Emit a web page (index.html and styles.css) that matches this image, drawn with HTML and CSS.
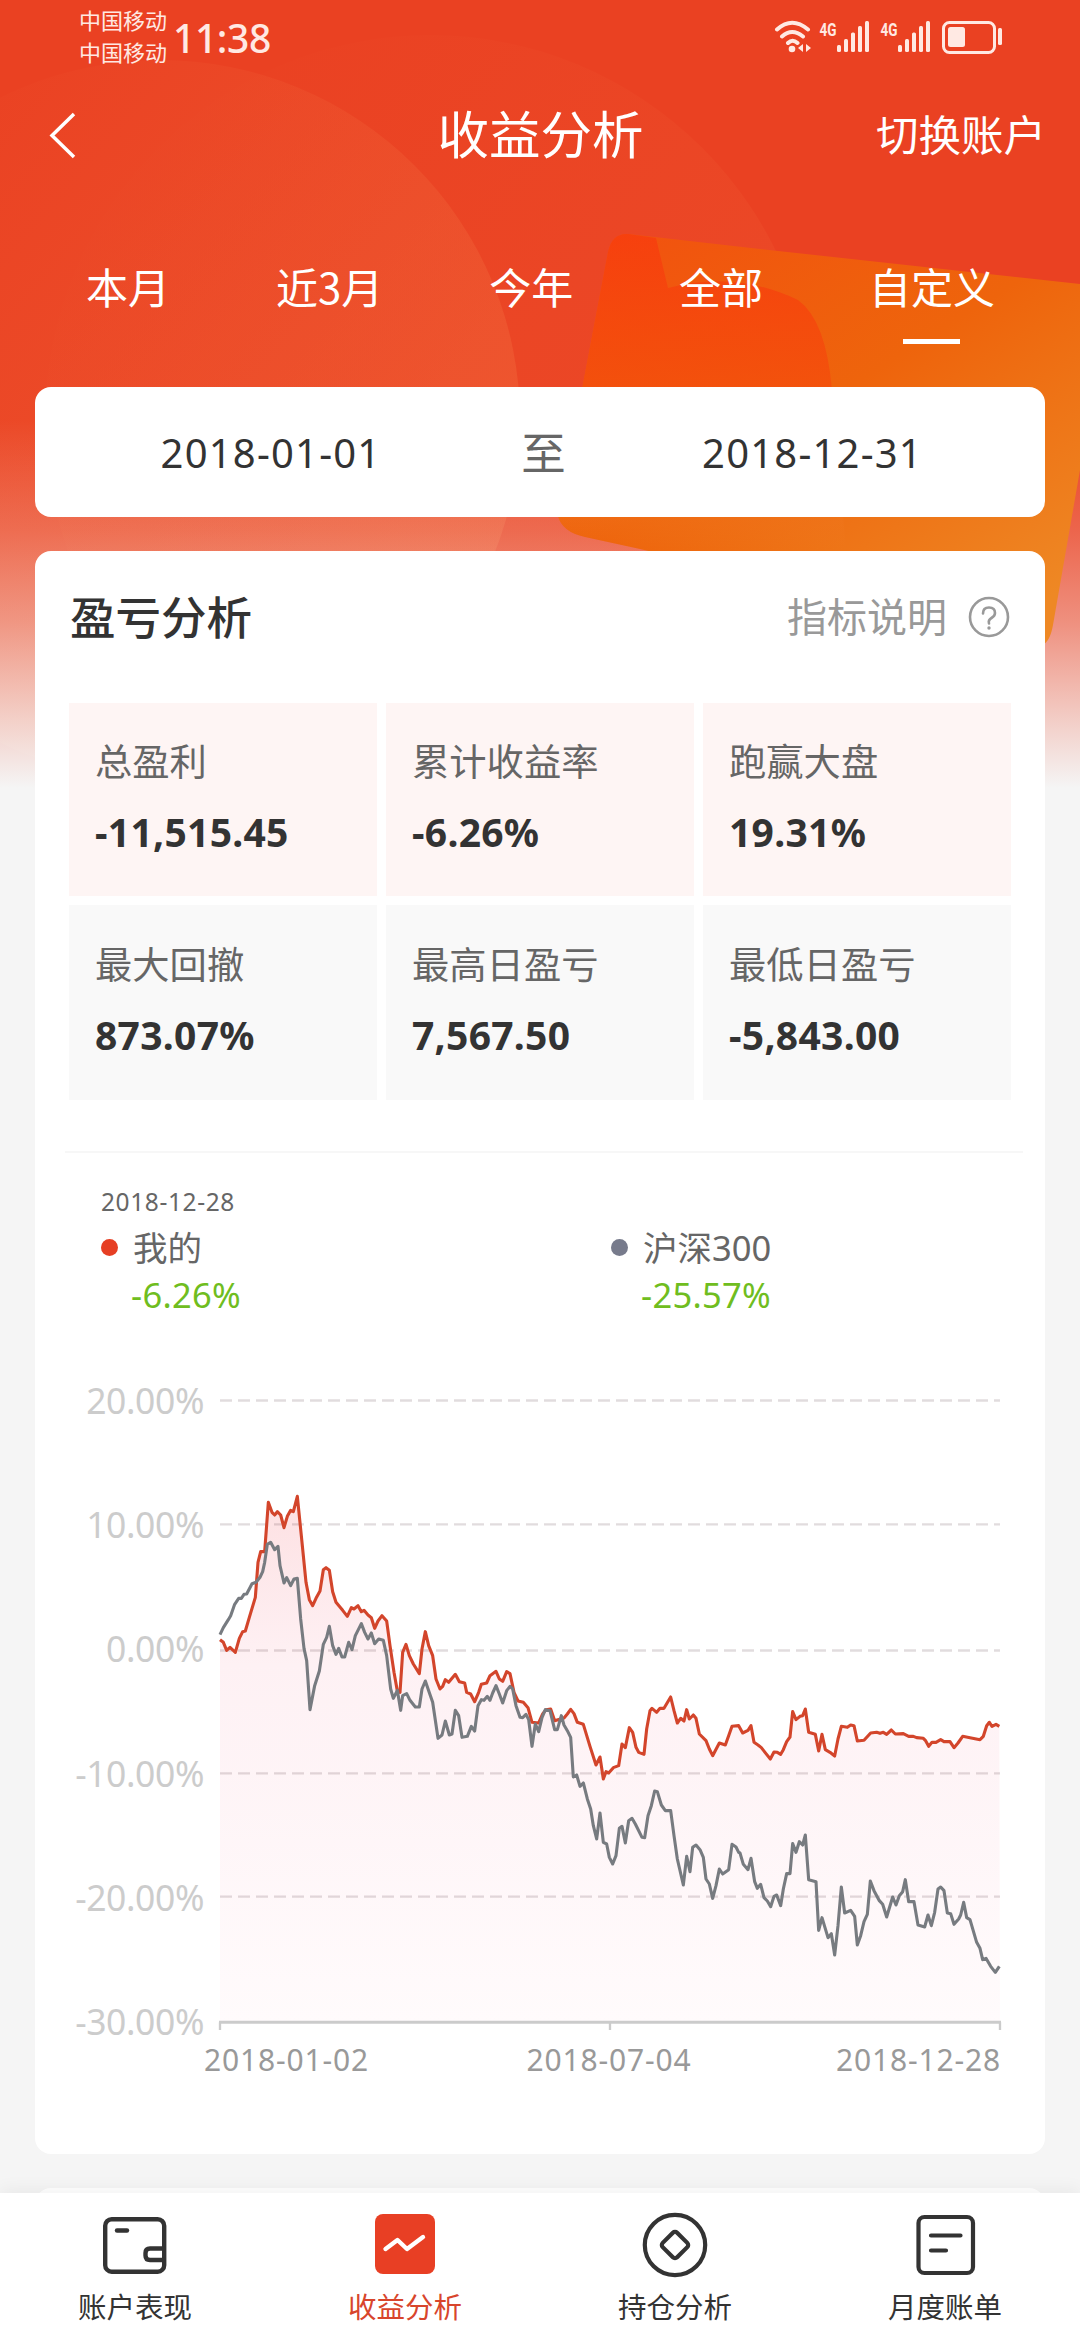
FILE: index.html
```html
<!DOCTYPE html>
<html lang="zh-CN">
<head>
<meta charset="utf-8">
<title>收益分析</title>
<link rel="stylesheet" href="styles.css">
</head>
<body>
<div class="screen">
  <main class="content">
    <svg class="backdrop" viewBox="0 0 1080 800" aria-hidden="true">
      <defs>
        <linearGradient id="lobe" x1=".1" y1=".1" x2=".8" y2=".7">
          <stop offset="0" stop-color="#f26a3c" stop-opacity="0"/>
          <stop offset="1" stop-color="#f26a3c" stop-opacity=".42"/>
        </linearGradient>
        <linearGradient id="fade" x1="0" y1="0" x2="0" y2="1">
          <stop offset="0" stop-color="#f5f5f5" stop-opacity="0"/>
          <stop offset=".3" stop-color="#f5f5f5" stop-opacity=".2"/>
          <stop offset=".55" stop-color="#f5f5f5" stop-opacity=".44"/>
          <stop offset=".8" stop-color="#f5f5f5" stop-opacity=".76"/>
          <stop offset="1" stop-color="#f5f5f5"/>
        </linearGradient>
        <linearGradient id="ticket" x1="0" y1="0" x2=".8" y2="1">
          <stop offset="0" stop-color="#f2500f"/>
          <stop offset=".5" stop-color="#ee640c"/>
          <stop offset="1" stop-color="#ee8824"/>
        </linearGradient>
        <linearGradient id="fold" x1="0" y1="0" x2="0" y2="1">
          <stop offset="0" stop-color="#f83a0e"/>
          <stop offset=".5" stop-color="#f44d0c"/>
          <stop offset=".85" stop-color="#f0741c" stop-opacity=".7"/>
          <stop offset="1" stop-color="#f07c22" stop-opacity="0"/>
        </linearGradient>
      </defs>
      <rect width="1080" height="800" fill="#ea4122"/>
      <circle cx="430" cy="420" r="385" fill="url(#lobe)" opacity=".45"/>
      <circle cx="160" cy="420" r="360" fill="url(#lobe)"/>
      <rect y="420" width="1080" height="368" fill="url(#fade)"/>
      <rect y="788" width="1080" height="12" fill="#f5f5f5"/>
      <path d="M628 234Q612 233 608 252L558 516Q562 532 585 537L640 549L1042 645Q1050 642 1053 625L1080 470V284L760 249Z" fill="url(#ticket)"/>
      <path d="M628 234Q612 233 608 252L558 516Q562 532 585 537L640 549H846L832 390Q826 320 798 300Q735 270 668 288L656 238Z" fill="url(#fold)" opacity=".75"/>
    </svg>

    <header class="top">
      <div class="status">
        <div class="carriers"><span>中国移动</span><span>中国移动</span></div>
        <time class="clock">11:38</time>
        <svg class="signals" viewBox="0 0 232 40" fill="#ffe9e3">
          <g fill="none" stroke="#ffe9e3" stroke-width="4" stroke-linecap="round">
            <path d="M3 12.500Q18-1 34 12.500M8 19.500Q18 10.500 29 19.500M14 26Q18.500 21.500 23.500 26"/>
          </g>
          <circle cx="18" cy="32" r="3.300"/>
          <path d="M29 27v8l-5-4zM32 27v8l5-4z"/>
          <text x="45.500" y="18.500" class="net" textLength="17" lengthAdjust="spacingAndGlyphs">4G</text><text x="106.500" y="18.500" class="net" textLength="17" lengthAdjust="spacingAndGlyphs">4G</text>
          <g id="bars"><rect x="63" y="28" width="4" height="7" rx="1.500"/><rect x="70" y="22" width="4" height="13" rx="1.500"/><rect x="77" y="15.500" width="4" height="19.500" rx="1.500"/><rect x="84" y="9" width="4" height="26" rx="1.500"/><rect x="91" y="4" width="4" height="31" rx="1.500"/></g>
          <use href="#bars" x="61"/>
          <rect x="169.500" y="5.500" width="51" height="30" rx="6" fill="none" stroke="#ffe9e3" stroke-width="3"/>
          <rect x="174" y="10" width="17" height="20" rx="2.500"/>
          <rect x="224" y="11" width="4" height="17" rx="1.500"/>
        </svg>
      </div>
      <div class="titlebar">
        <svg class="back" viewBox="0 0 30 48"><path d="M27 3L5 24.500L27 46" fill="none" stroke="#fff" stroke-width="3.500"/></svg>
        <h1>收益分析</h1>
        <a class="switch">切换账户</a>
      </div>
      <nav class="tabs">
        <a>本月</a><a>近3月</a><a>今年</a><a>全部</a><a class="active">自定义</a>
      </nav>
    </header>

    <section class="range">
      <span class="date">2018-01-01</span><span class="to">至</span><span class="date">2018-12-31</span>
    </section>

    <section class="panel">
      <div class="panel-head">
        <h2>盈亏分析</h2>
        <a class="help"><span>指标说明</span>
          <svg viewBox="0 0 42 42" fill="none" stroke="#999" stroke-width="2.600"><circle cx="21" cy="21" r="19"/><path d="M15 17.500Q15 11.500 21 11.500T27 17Q27 20 23.500 22T21 27.500" stroke-linecap="round"/><circle cx="21" cy="32" r="1.700" fill="#999" stroke="none"/></svg>
        </a>
      </div>
      <dl class="stats">
        <div><dt>总盈利</dt><dd>-11,515.45</dd></div>
        <div><dt>累计收益率</dt><dd>-6.26%</dd></div>
        <div><dt>跑赢大盘</dt><dd>19.31%</dd></div>
        <div><dt>最大回撤</dt><dd>873.07%</dd></div>
        <div><dt>最高日盈亏</dt><dd>7,567.50</dd></div>
        <div><dt>最低日盈亏</dt><dd>-5,843.00</dd></div>
      </dl>
      <div class="legend">
        <time>2018-12-28</time>
        <div class="entry"><i class="dot mine"></i><span>我的</span><b>-6.26%</b></div>
        <div class="entry"><i class="dot index"></i><span>沪深300</span><b>-25.57%</b></div>
      </div>
      <div class="chart">
        <div class="scale"><span>20.00%</span><span>10.00%</span><span>0.00%</span><span>-10.00%</span><span>-20.00%</span><span>-30.00%</span></div>
        <svg class="plot" viewBox="654 4200 2352 1900" preserveAspectRatio="none">
          <defs>
            <linearGradient id="area" gradientUnits="userSpaceOnUse" x1="0" y1="4492" x2="0" y2="6070">
              <stop offset="0" stop-color="#fde0e2"/>
              <stop offset=".32" stop-color="#fef1f4"/>
              <stop offset="1" stop-color="#fffbfc"/>
            </linearGradient>
          </defs>
          <path id="fill" fill="url(#area)"/>
          <path class="grid" d="M660 4204.500H3000M660 4576H3000M660 4954.500H3000M660 5323H3000M660 5693H3000"/>
          <path id="mine" class="line" stroke="#d3452b"/>
          <path id="index" class="line" stroke="#777b80"/>
          <path class="axis" d="M657 6070H3003"/>
          <path class="tick" d="M660 6070V6093M1830 6070V6093M3000 6070V6093"/>
        </svg>
        <div class="days"><span>2018-01-02</span><span>2018-07-04</span><span>2018-12-28</span></div>
      </div>
    </section>
    <section class="next"></section>
  </main>

  <nav class="bottom">
    <a><svg viewBox="0 0 68 68" fill="none" stroke="#333" stroke-width="4.400" stroke-linecap="round"><rect x="4.200" y="8.200" width="59" height="52.500" rx="6.500"/><path d="M16 19.500H26"/><path d="M62 37.500H49Q44.500 37.500 44.500 42V44.500Q44.500 49 49 49H62"/></svg>账户表现</a>
    <a class="on"><svg viewBox="0 0 68 68"><rect x="4" y="3" width="60" height="60" rx="8" fill="#e83f24"/><path d="M14.500 38L26.500 29L36 38L52 26" fill="none" stroke="#fff" stroke-width="4.400" stroke-linecap="round" stroke-linejoin="round"/></svg>收益分析</a>
    <a><svg viewBox="0 0 68 68" fill="none" stroke="#333" stroke-width="4.200"><circle cx="34" cy="34" r="30.200"/><rect x="23.800" y="23.800" width="20.400" height="20.400" rx="3" transform="rotate(45 34 34)"/></svg>持仓分析</a>
    <a><svg viewBox="0 0 68 68" fill="none" stroke="#333" stroke-width="4.200" stroke-linecap="round"><rect x="7.500" y="6" width="54.500" height="56" rx="6"/><path d="M20 24.500H49.500M20 39.500H35"/></svg>月度账单</a>
  </nav>
</div>
<script src="chart.js"></script>
</body>
</html>
```
FILE: styles.css
```css
* { box-sizing: border-box; }
body { margin: 0; background: #f5f5f5; font-family: "Noto Sans", "Noto Sans CJK SC", sans-serif; color: #333; }
h1, h2, dl, dd { margin: 0; font-weight: 400; }
svg { display: block; }

.screen { width: 1080px; height: 2340px; display: flex; flex-direction: column; overflow: hidden; }
.content { position: relative; flex: 1; min-height: 0; overflow: hidden; padding: 0 35px; }
.backdrop { position: absolute; left: 0; top: 0; width: 1080px; height: 800px; }
.top, .range, .panel, .next { position: relative; }

.top { height: 387px; color: #fff; margin: 0 -35px; font-family: "Noto Sans CJK SC", sans-serif; }
.status { display: flex; height: 76px; padding: 3px 74px 0 79px; color: #ffe9e3; }
.carriers { display: flex; flex-direction: column; font-size: 22px; line-height: 32px; }
.clock { font: 500 39px/69px "Noto Sans", sans-serif; margin-left: 6px; letter-spacing: -0.4px; }
.signals { width: 232px; height: 40px; margin: 14px 0 0 auto; }
.net { font: 700 19px Roboto, sans-serif; }
.titlebar { display: grid; grid-template-columns: 1fr 204px 1fr; align-items: center; height: 112px; padding: 0 36px 0 47px; }
.back { width: 30px; height: 48px; margin-top: 6px; }
h1 { font-size: 51.500px; line-height: 70px; margin: 0 0 0 -6px; white-space: nowrap; }
.switch { font-size: 42.500px; justify-self: end; margin-right: -2px; }
.tabs { display: flex; justify-content: space-between; padding: 58px 85px 0 86px; font-size: 42px; line-height: 80px; }
.tabs a { display: flex; flex-direction: column; align-items: center; }
.active::after { content: ""; width: 57px; height: 5px; margin-top: 13px; background: #fff; }

.range { height: 130px; display: grid; grid-template-columns: 472px 73px 1fr; align-items: center; justify-items: center; border-radius: 16px; background: #fff; }
.date { font-size: 40px; letter-spacing: 1.200px; }
.to { font-size: 44.500px; color: #666; margin-top: -4px; }

.panel { height: 1603px; margin-top: 34px; padding: 0 34px; background: #fff; border-radius: 16px; }
.panel-head { display: flex; align-items: center; justify-content: space-between; height: 152px; padding: 0 1px 22px; }
h2 { font-size: 45.500px; font-weight: 500; font-family: "Noto Sans CJK SC", sans-serif; margin-top: -2px; }
.help { display: flex; align-items: center; gap: 21px; color: #999; font-size: 40px; }
.help span { margin-top: -3px; }
.help svg { width: 42px; height: 42px; margin-top: 2px; }
.stats { display: grid; grid-template-columns: repeat(3, 1fr); grid-template-rows: 193px 195px; gap: 9px; }
.stats div { padding: 34px 0 0 26px; background: #fef5f4; }
.stats div:nth-child(n+4) { background: #f9f9f9; padding-top: 35px; }
dt { font-size: 37.300px; line-height: 50px; color: #666; }
dd { font-size: 39px; line-height: 50px; margin-top: 20px; font-weight: 700; letter-spacing: 0.300px; }

.legend { display: grid; grid-template-columns: 510px 1fr; margin: 51px -12px 0 -4px; padding: 34px 0 0 36px; border-top: 2px solid #f7f7f7; color: #666; }
.legend time { grid-column: 1 / -1; font-size: 24.500px; line-height: 30px; letter-spacing: 0.600px; }
.entry { display: grid; grid-template-columns: 32px 1fr; align-items: center; line-height: 47px; font-size: 34.500px; margin-top: 7px; }
.entry b { grid-column: 2; font-weight: 400; color: #6fbd20; font-size: 34.500px; letter-spacing: 0.300px; margin-left: -2px; }
.dot { width: 17px; height: 17px; border-radius: 50%; }
.mine { background: #e63f24; }
.index { background: #777b8c; }

.chart { display: grid; grid-template-columns: 135px 784px; column-gap: 14px; margin-top: 62px; }
.scale { display: flex; flex-direction: column; justify-content: space-between; height: 661px; text-align: right; font-size: 35.500px; line-height: 40px; letter-spacing: -0.400px; color: #ccc; }
.plot { width: 784px; height: 633.333px; margin-top: 19px; }
.grid { fill: none; stroke: #5a3c46; stroke-opacity: .18; stroke-width: 7; stroke-dasharray: 36 18; }
.line { fill: none; stroke-width: 9.300; stroke-linejoin: round; }
.axis { stroke: #cbcbcb; stroke-width: 9; }
.tick { stroke: #cbcbcb; stroke-width: 7; }
.days { grid-column: 1 / -1; display: flex; justify-content: space-between; padding: 0 1px 0 135px; margin-top: -1px; font-size: 30px; line-height: 40px; letter-spacing: 0.850px; color: #999; }
.days span:nth-child(2) { margin-left: 13px; }
.next { height: 60px; margin-top: 34px; border-radius: 16px; background: #fff; }

.bottom { height: 147px; display: grid; grid-template-columns: repeat(4, 1fr); background: #fff; box-shadow: 0 -4px 16px rgba(0, 0, 0, .05); position: relative; }
.bottom a { display: flex; flex-direction: column; align-items: center; padding-top: 18px; font-size: 28.500px; line-height: 40px; font-family: "Noto Sans CJK SC", sans-serif; }
.bottom svg { width: 68px; height: 68px; margin-bottom: 7px; }
.bottom .on { color: #d8452c; }
```
FILE: chart.js
```js
// Each chunk: x origin, y origin, then "x,y" pairs relative to it.
const mine = [
  [630, 4440, "30,482 40,490 50,514 60,505 76,520 88,478 98,458 106,456 118,415 136,355 144,250 152,218 164,218 175,70 186,100 194,108 202,98 212,108 222,146 232,112 242,94 250,98 262,52 276,190 288,310 298,362 308,380 318,358 330,336 340,272 348,266 358,274 368,338 378,370 398,394 412,412 424,386 432,390 444,380 454,398 462,394 474,408 484,416 494,448 504,426 516,410 530,426 540,500 552,580 562,636 570,640 578,520 588,496 598,530 610,555 628,584 636,510 646,458 656,500 668,530 678,600 690,630 698,622 706,602 716,610 736,586 748,608 764,612 770,640 782,645 794,668 806,640 814,616 830,612 840,590"],
  [1470, 4920, "8,104 18,97 28,120 38,127 50,98 60,104 72,160 84,186 100,190 114,206 126,250 146,252 158,225 168,212 182,210 194,245 204,242 222,237 232,225 242,211 252,224 262,250 280,256 300,322 318,378 330,354 340,420 348,398 356,402 370,386 386,380 396,315 406,326 418,266 428,280 438,325 446,340 462,346 470,270 480,215 486,208 500,220 510,208 522,208 542,174 552,215 562,252 572,238 582,246 590,212 598,240 610,228 618,238 628,285 648,305 658,330 668,350 688,312 706,318 716,290 726,262 746,260"],
  [2220, 5040, "8,162 24,154 33,140 42,190 54,198 64,206 78,224 91,240 102,219 112,220 122,226 130,212 140,188 150,174 158,98 168,122 180,112 188,110 196,90 206,160 226,166 236,216 246,166 256,212 270,220 284,231 294,180 304,142 322,145 332,138 342,140 352,186 372,184 392,162 410,160 420,163 430,160 440,166 454,153 466,165 490,164 506,172 520,172 530,176 550,178 556,184 566,202 576,190 588,190 602,182 612,188 630,188 642,206 654,192 668,172 690,176 720,182 730,172 740,140 748,130 756,142 768,136 778,142"]
];
const index = [
  [630, 4440, "30,467 40,446 55,422 62,410 74,376 86,358 94,358 102,346 110,345 126,314 138,310 150,295 158,278 164,250 172,196 182,190 194,212 204,202 210,260 222,312 230,296 242,320 252,300 262,298 272,420 282,508 290,545 300,692 314,620 328,576 340,496 350,475 358,442 368,500 378,526 386,508 396,534 404,534 416,490 426,512 436,470 454,434 464,460 474,480 484,462 494,494 506,480 520,484 530,530 542,630 550,658 562,634 572,694 578,650 590,644 600,664 616,684 628,684 636,630 646,606 656,635 668,670 684,778 696,768 706,726 718,768 726,765 736,694 746,710 756,775 772,772 784,742 794,756 804,680 814,662 822,664 832,652 840,664"],
  [1470, 4920, "8,162 18,140 28,165 38,192 50,155 60,142 68,150 78,200 90,235 98,236 108,226 116,242 126,322 136,255 146,278 156,236 166,212 180,215 194,272 202,272 214,230 222,258 232,275 242,295 250,414 260,408 270,442 280,432 292,480 302,510 310,560 320,600 330,522 340,610 350,615 358,655 368,675 378,650 388,568 396,562 406,612 416,545 426,538 436,555 456,595 464,596 474,530 484,500 494,456 502,458 514,498 526,515 542,515 552,590 562,660 580,738 590,652 600,698 608,625 618,618 630,632 640,655 648,720 658,735 668,778 678,740 688,690 698,705 716,692 726,616 738,624 746,640"],
  [2220, 5040, "0,522 10,556 24,572 33,538 44,608 52,628 62,616 72,656 82,666 92,683 102,652 110,648 122,680 130,630 140,584 150,584 158,494 168,520 178,488 188,498 196,468 206,602 228,608 236,754 246,716 264,776 274,764 284,828 294,740 304,624 314,702 332,694 344,712 352,798 362,770 372,728 382,706 391,606 402,635 418,665 428,676 440,714 458,654 468,678 478,650 488,638 496,602 506,668 522,668 534,738 554,744 564,708 574,740 584,700 594,630 602,624 612,635 622,702 632,704 642,736 656,720 662,708 671,670 680,716 690,722 710,790 720,808 728,842 738,838 752,862 766,880 778,862"]
];
const trace = chunks => "M" + chunks.flatMap(([ox, oy, pts]) =>
  pts.split(" ").map(p => { const [x, y] = p.split(","); return `${ox + +x} ${oy + +y}`; })).join("L");
document.getElementById("mine").setAttribute("d", trace(mine));
document.getElementById("index").setAttribute("d", trace(index));
document.getElementById("fill").setAttribute("d", trace(mine) + "L3000 6066L660 6066Z");
```
